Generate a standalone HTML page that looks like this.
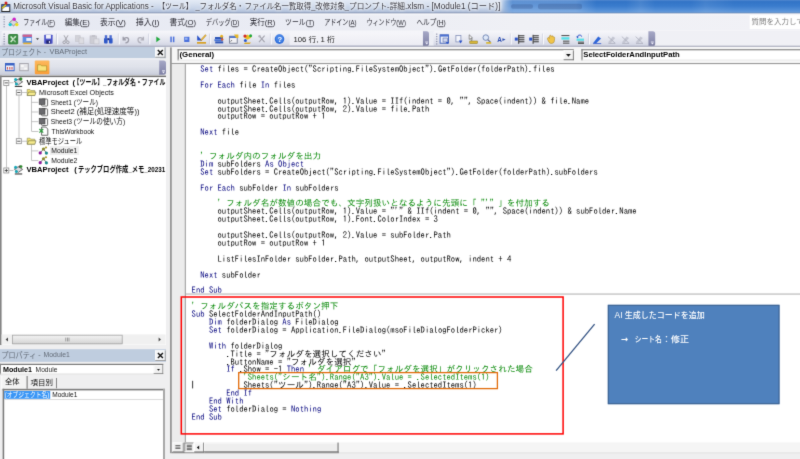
<!DOCTYPE html>
<html lang="ja"><head><meta charset="utf-8"><title>Microsoft Visual Basic for Applications</title>
<style>
html,body{margin:0;padding:0;background:#fff;}
body{width:800px;height:459px;overflow:hidden;position:relative;font-family:"Liberation Sans","Noto Sans CJK JP",sans-serif;}
#root{position:absolute;left:0;top:0;width:800px;height:459px;overflow:hidden;background:#fff;will-change:transform;filter:url(#soft);}
#root div,#root svg{position:absolute;box-sizing:border-box;}
svg.L{left:0;top:0;}
svg.T text{white-space:pre;font-family:"Liberation Sans","Noto Sans CJK JP",sans-serif;}
.code{position:absolute;white-space:pre;font-family:"IPAGothic","Liberation Mono","Noto Sans CJK JP",monospace;font-size:8.64px;line-height:7.9px;letter-spacing:0.008px;color:#000;margin:0;}
.k{color:#00007c}.c{color:#0a8a0a}
u{text-decoration:underline;text-underline-offset:0.5px;text-decoration-thickness:0.6px}
</style></head><body>
<svg width="0" height="0" style="position:absolute"><defs><filter id="soft" x="0" y="0" width="100%" height="100%" color-interpolation-filters="sRGB"><feConvolveMatrix order="3" kernelMatrix="0.0113 0.0838 0.0113 0.0838 0.6193 0.0838 0.0113 0.0838 0.0113" edgeMode="duplicate" preserveAlpha="true"/></filter></defs></svg>
<div id="root">
<svg class="L" width="800" height="459" viewBox="0 0 800 459"><defs><linearGradient id="tl" x1="0" y1="0" x2="0" y2="1"><stop offset="0" stop-color="#e4ebf5"/><stop offset="0.25" stop-color="#d9e2f0"/><stop offset="0.6" stop-color="#c8d4e8"/><stop offset="0.85" stop-color="#b3c2db"/><stop offset="1" stop-color="#a0afca"/></linearGradient><linearGradient id="tr" x1="0" y1="0" x2="0" y2="1"><stop offset="0" stop-color="#5288d0"/><stop offset="0.12" stop-color="#3274c6"/><stop offset="0.45" stop-color="#3a7ccd"/><stop offset="0.8" stop-color="#5892d8"/><stop offset="0.92" stop-color="#6a9edb"/><stop offset="1" stop-color="#7a9cc8"/></linearGradient><linearGradient id="tm" x1="0" y1="0" x2="1" y2="0"><stop offset="0" stop-color="#000"/><stop offset="1" stop-color="#fff"/></linearGradient><mask id="tmask" maskUnits="userSpaceOnUse" x="0" y="0" width="800" height="14"><rect x="500" y="0" width="13" height="14" fill="url(#tm)"/><rect x="513" y="0" width="287" height="14" fill="#fff"/></mask><linearGradient id="g4" x1="0" y1="0" x2="1" y2="0"><stop offset="0" stop-color="rgb(235,240,250)" stop-opacity="0"/><stop offset="0.03" stop-color="rgb(235,240,250)" stop-opacity=".24"/><stop offset="0.24" stop-color="rgb(235,240,250)" stop-opacity=".22"/><stop offset="0.31" stop-color="rgb(235,240,250)" stop-opacity="0"/><stop offset="0.41" stop-color="rgb(255,255,255)" stop-opacity="0"/><stop offset="0.46" stop-color="rgb(255,255,255)" stop-opacity=".10"/><stop offset="0.51" stop-color="rgb(255,255,255)" stop-opacity="0"/><stop offset="0.63" stop-color="rgb(255,255,255)" stop-opacity="0"/><stop offset="0.68" stop-color="rgb(255,255,255)" stop-opacity=".08"/><stop offset="0.78" stop-color="rgb(255,255,255)" stop-opacity="0"/><stop offset="1" stop-color="rgb(255,255,255)" stop-opacity="0"/></linearGradient><linearGradient id="g5" x1="0" y1="0" x2="1" y2="0"><stop offset="0" stop-color="#e6e9f2"/><stop offset="0.38" stop-color="#eaecf4"/><stop offset="0.65" stop-color="#eff0f5"/><stop offset="1" stop-color="#f1f1f6"/></linearGradient><linearGradient id="g6" x1="0" y1="0" x2="0" y2="1"><stop offset="0" stop-color="rgb(255,255,255)" stop-opacity=".7"/><stop offset="1" stop-color="rgb(255,255,255)" stop-opacity="0"/></linearGradient><linearGradient id="g7" x1="0" y1="0" x2="1" y2="0"><stop offset="0" stop-color="#e6e9f2"/><stop offset="0.38" stop-color="#eaecf4"/><stop offset="0.65" stop-color="#eff0f5"/><stop offset="1" stop-color="#f0f0f5"/></linearGradient><linearGradient id="g8" x1="0" y1="0" x2="0" y2="1"><stop offset="0" stop-color="#f6f6fa"/><stop offset="0.35" stop-color="#ecedf4"/><stop offset="0.7" stop-color="#dfe1ec"/><stop offset="1" stop-color="#d0d3e2"/></linearGradient><linearGradient id="g9" x1="0" y1="0" x2="0" y2="1"><stop offset="0" stop-color="#a6a8c6"/><stop offset="0.6" stop-color="#8e90b2"/><stop offset="1" stop-color="#7c7ea2"/></linearGradient><linearGradient id="g10" x1="0" y1="0" x2="0" y2="1"><stop offset="0" stop-color="#f6f6fa"/><stop offset="0.35" stop-color="#ecedf4"/><stop offset="0.7" stop-color="#dfe1ec"/><stop offset="1" stop-color="#d0d3e2"/></linearGradient><linearGradient id="g11" x1="0" y1="0" x2="0" y2="1"><stop offset="0" stop-color="#a6a8c6"/><stop offset="0.6" stop-color="#8e90b2"/><stop offset="1" stop-color="#7c7ea2"/></linearGradient><linearGradient id="g12" x1="0" y1="0" x2="0" y2="1"><stop offset="0" stop-color="#f6f6fa"/><stop offset="1" stop-color="#ececf3"/></linearGradient><linearGradient id="g13" x1="0" y1="0" x2="0" y2="1"><stop offset="0" stop-color="#f2f3f7"/><stop offset="0.12" stop-color="#e6e8ef"/><stop offset="0.5" stop-color="#dfe2ea"/><stop offset="0.88" stop-color="#cfd3df"/><stop offset="1" stop-color="#c2c6d4"/></linearGradient><linearGradient id="g14" x1="0" y1="0" x2="0" y2="1"><stop offset="0" stop-color="#a6a8c6"/><stop offset="0.6" stop-color="#8e90b2"/><stop offset="1" stop-color="#7c7ea2"/></linearGradient><linearGradient id="g15" x1="0" y1="0" x2="0" y2="1"><stop offset="0" stop-color="#fdb85c"/><stop offset="1" stop-color="#f99e38"/></linearGradient><linearGradient id="g16" x1="0" y1="0" x2="0" y2="1"><stop offset="0" stop-color="#f4f4f4"/><stop offset="0.45" stop-color="#e6e6e6"/><stop offset="1" stop-color="#d2d2d2"/></linearGradient></defs>
<rect x="0" y="0" width="800" height="13.6" fill="url(#tl)"/>
<rect x="0" y="0" width="800" height="13.6" fill="url(#tr)" mask="url(#tmask)"/>
<rect x="505" y="0" width="295" height="12.6" fill="url(#g4)"/>
<path d="M513 4.2H531A2 2 0 0 1 533 6.2V6.8A2 2 0 0 1 531 8.8H513A2 2 0 0 1 511 6.8V6.2A2 2 0 0 1 513 4.2Z" fill="rgb(30,50,100)" fill-opacity=".22"/>
<path d="M540 3.8H580A2 2 0 0 1 582 5.8V7.2A2 2 0 0 1 580 9.2H540A2 2 0 0 1 538 7.2V5.8A2 2 0 0 1 540 3.8Z" fill="rgb(30,50,100)" fill-opacity=".22"/>
<rect x="0" y="12.6" width="800" height="1" fill="rgb(95,110,145)" fill-opacity=".6"/>
<g transform="translate(1 1.5)"><rect x="0.8" y="3.2" width="8" height="6.8" fill="#fff" stroke="#222" stroke-width="1"/><rect x="0.8" y="3.2" width="8" height="2" fill="#3a62c8"/><path d="M0.5 6 L4.5 2.5 L5.8 3.8 L1.6 7.2Z" fill="#e8d020" stroke="#333" stroke-width=".4"/><circle cx="5" cy="1.6" r="1.5" fill="#d02020"/></g>
<rect x="0" y="13.6" width="800" height="17" fill="url(#g5)"/>
<rect x="0" y="13.6" width="800" height="2.2" fill="url(#g6)"/>
<rect x="3.6" y="16.4" width="1.1" height="1.1" fill="#7a7f9a"/>
<rect x="3.6" y="18.85" width="1.1" height="1.1" fill="#7a7f9a"/>
<rect x="3.6" y="21.3" width="1.1" height="1.1" fill="#7a7f9a"/>
<rect x="3.6" y="23.75" width="1.1" height="1.1" fill="#7a7f9a"/>
<rect x="3.6" y="26.2" width="1.1" height="1.1" fill="#7a7f9a"/>
<g transform="translate(8 17)"><path d="M1.5 5.5 L5.5 2.2 L9.5 5.5 L5.5 8.8Z" fill="#d8d8dc" stroke="#555" stroke-width=".6"/><circle cx="2.2" cy="7.6" r="1.7" fill="#18c8d8"/><circle cx="8.8" cy="7.6" r="1.7" fill="#e8e018"/><circle cx="6.2" cy="2.2" r="1.7" fill="#d020c8"/></g>
<rect x="749.6" y="15.2" width="51" height="13.8" fill="#fff"/>
<rect x="0" y="30.6" width="800" height="15.8" fill="url(#g7)"/>
<path d="M3 31H423.5V46.2H3A1.5 1.5 0 0 1 1.5 44.7V32.5A1.5 1.5 0 0 1 3 31Z" fill="url(#g8)"/>
<path d="M423 31.3H426.5A2.5 2.5 0 0 1 429 33.8V43.7A2.5 2.5 0 0 1 426.5 46.2H423V31.3Z" fill="url(#g9)"/>
<rect x="425.2" y="41.6" width="3" height="0.9" fill="#f4f4ff"/>
<polygon points="425.6,43 428,43 426.8,44.6" fill="#f4f4ff"/>
<path d="M435 31H648.5V46.2H435A1.5 1.5 0 0 1 433.5 44.7V32.5A1.5 1.5 0 0 1 435 31Z" fill="url(#g10)"/>
<path d="M648.4 31.3H652.7A2.5 2.5 0 0 1 655.2 33.8V43.7A2.5 2.5 0 0 1 652.7 46.2H648.4V31.3Z" fill="url(#g11)"/>
<rect x="650.8" y="41.6" width="3" height="0.9" fill="#f4f4ff"/>
<polygon points="651.2,43 653.6,43 652.4,44.6" fill="#f4f4ff"/>
<rect x="3.6" y="33.6" width="1.1" height="1.1" fill="#7a7f9a"/>
<rect x="3.6" y="36.05" width="1.1" height="1.1" fill="#7a7f9a"/>
<rect x="3.6" y="38.5" width="1.1" height="1.1" fill="#7a7f9a"/>
<rect x="3.6" y="40.95" width="1.1" height="1.1" fill="#7a7f9a"/>
<rect x="3.6" y="43.4" width="1.1" height="1.1" fill="#7a7f9a"/>
<rect x="436.2" y="33.6" width="1.1" height="1.1" fill="#7a7f9a"/>
<rect x="436.2" y="36.05" width="1.1" height="1.1" fill="#7a7f9a"/>
<rect x="436.2" y="38.5" width="1.1" height="1.1" fill="#7a7f9a"/>
<rect x="436.2" y="40.95" width="1.1" height="1.1" fill="#7a7f9a"/>
<rect x="436.2" y="43.4" width="1.1" height="1.1" fill="#7a7f9a"/>
<rect x="56.2" y="33.6" width="0.8" height="10.4" fill="#c9ccdb"/>
<rect x="57" y="33.8" width="1.1" height="10.6" fill="#fbfbfe"/>
<rect x="117.9" y="33.6" width="0.8" height="10.4" fill="#c9ccdb"/>
<rect x="118.7" y="33.8" width="1.1" height="10.6" fill="#fbfbfe"/>
<rect x="148.4" y="33.6" width="0.8" height="10.4" fill="#c9ccdb"/>
<rect x="149.2" y="33.8" width="1.1" height="10.6" fill="#fbfbfe"/>
<rect x="209.3" y="33.6" width="0.8" height="10.4" fill="#c9ccdb"/>
<rect x="210.1" y="33.8" width="1.1" height="10.6" fill="#fbfbfe"/>
<rect x="269.9" y="33.6" width="0.8" height="10.4" fill="#c9ccdb"/>
<rect x="270.7" y="33.8" width="1.1" height="10.6" fill="#fbfbfe"/>
<rect x="509.9" y="33.6" width="0.8" height="10.4" fill="#c9ccdb"/>
<rect x="510.7" y="33.8" width="1.1" height="10.6" fill="#fbfbfe"/>
<rect x="542" y="33.6" width="0.8" height="10.4" fill="#c9ccdb"/>
<rect x="542.8" y="33.8" width="1.1" height="10.6" fill="#fbfbfe"/>
<rect x="588.1" y="33.6" width="0.8" height="10.4" fill="#c9ccdb"/>
<rect x="588.9" y="33.8" width="1.1" height="10.6" fill="#fbfbfe"/>
<rect x="289.6" y="32.4" width="133" height="12.8" fill="url(#g12)"/>
<g transform="translate(8.2 34)"><rect x=".5" y=".5" width="9" height="9.4" rx=".6" fill="#3f9148" stroke="#2c7a36" stroke-width=".9"/><path d="M2.4 2.4 L7.4 8 M7.6 2.2 L2.4 8" stroke="#d6ecd4" stroke-width="1.5"/><path d="M5 5.2 L8.6 5.2 M5 7 L8.6 7" stroke="#2c7a36" stroke-width=".6"/></g>
<g transform="translate(22.3 34)"><rect x=".3" y=".6" width="9.4" height="8.6" fill="#5d8fe0"/><rect x=".3" y=".6" width="9.4" height="2.2" fill="#d05d8a"/><rect x="4" y="4" width="5" height="3" fill="#e8eefc"/><rect x="1" y="8.6" width="8" height="1.6" fill="#e6b030"/></g>
<polygon points="36,38.2 39,38.2 37.5,40" fill="#333"/>
<g transform="translate(43.9 34.4)"><rect x=".3" y=".3" width="8.4" height="9" rx=".6" fill="#4a52c8"/><rect x="2" y=".6" width="5" height="3.6" fill="#f2f2fa"/><rect x="2.4" y="6" width="4.2" height="3.3" fill="#20246a"/><rect x="5" y="6.6" width="1.1" height="2.2" fill="#dde"/></g>
<g transform="translate(62 34.5)"><path d="M2 .8 L5.2 6.5 M6 .8 L2.8 6.5" stroke="#9a9aa2" stroke-width=".9" fill="none"/><circle cx="2.2" cy="7.8" r="1.3" fill="none" stroke="#9a9aa2" stroke-width=".9"/><circle cx="5.8" cy="7.8" r="1.3" fill="none" stroke="#9a9aa2" stroke-width=".9"/></g>
<g transform="translate(75 34.5)"><rect x=".6" y="1.2" width="4.6" height="5.6" fill="#d2d2d8" stroke="#c2c2ca" stroke-width=".6"/><rect x="4" y="3.4" width="4.8" height="5.8" fill="#dcdce2" stroke="#c0c0c8" stroke-width=".6"/></g>
<g transform="translate(89.4 34.3)"><rect x=".6" y="1.6" width="6.6" height="7.4" fill="#cdcdd4" stroke="#bdbdc6" stroke-width=".6"/><rect x="2.5" y=".8" width="3.2" height="1.8" fill="#c0c0c8"/><rect x="4.6" y="4.6" width="5" height="5" fill="#e0e0e6" stroke="#c0c0c8" stroke-width=".6"/></g>
<g transform="translate(103.6 34.6)"><rect x=".4" y="3.4" width="3.6" height="5.6" rx="1" fill="#2f58c8"/><rect x="5.4" y="3.4" width="3.6" height="5.6" rx="1" fill="#2f58c8"/><rect x="1.2" y=".6" width="2.4" height="3.4" fill="#4a6ad0"/><rect x="5.8" y=".6" width="2.4" height="3.4" fill="#4a6ad0"/><rect x="3.8" y="3.6" width="1.8" height="2" fill="#1c2c80"/></g>
<g transform="translate(122 34.8)"><path d="M1.2 2 L1.2 5 L4 5 M1.4 4.8 C3 2 6.6 2.4 6.6 5 C6.6 6.8 5 8 3.4 8" fill="none" stroke="#9a9aa6" stroke-width="1.3"/></g>
<g transform="translate(136.2 34.8)"><path d="M7.2 2 L7.2 5 L4.4 5 M7 4.8 C5.4 2 1.8 2.4 1.8 5 C1.8 6.8 3.4 8 5 8" fill="none" stroke="#b0b0ba" stroke-width="1.3"/></g>
<g transform="translate(156 36.2)"><path d="M.3 .2 L4.3 3.1 L.3 6Z" fill="#20a83c"/></g>
<g transform="translate(170.1 36.6)"><rect x=".2" y="0" width="1.5" height="5.6" fill="#4a70dc"/><rect x="2.8" y="0" width="1.5" height="5.6" fill="#4a70dc"/></g>
<g transform="translate(184 36.6)"><rect x=".2" y=".2" width="5.2" height="5.2" fill="#4a70dc"/><rect x="1" y="1" width="2.6" height="2.2" fill="#98b4f4"/></g>
<g transform="translate(196.6 34)"><path d="M.6 1.2 L5.4 6.6 L.6 6.6Z" fill="#2a52c8"/><rect x=".4" y="8" width="9" height="1.7" fill="#d8a020"/><path d="M8.8 .6 L9.6 1.6 L5.2 6.4 L4 6.8 L4.4 5.4Z" fill="#f0c030" stroke="#a06818" stroke-width=".4"/></g>
<g transform="translate(214 34)"><rect x="1" y="3" width="8" height="2" fill="#2e56b8"/><rect x=".4" y="5.2" width="8.4" height="2" fill="#4a76d6"/><rect x="1.2" y="7.4" width="8" height="2" fill="#2e56b8"/><circle cx="7.6" cy="2.2" r="1.5" fill="#e8b020"/><circle cx="8.2" cy="5.4" r="1.2" fill="#e05a28"/></g>
<g transform="translate(229 34)"><rect x=".6" y="2.2" width="7.6" height="7" fill="#f2f2f6" stroke="#6a7088" stroke-width=".8"/><rect x=".6" y="2.2" width="7.6" height="1.8" fill="#5074c8"/><path d="M5 .6 L9.4 .6 L9.4 4 L7.2 4Z" fill="#e8b828"/><path d="M3 6 L1.6 7.6" stroke="#555" stroke-width=".8"/></g>
<g transform="translate(243 34)"><path d="M4.5 .6 L8.4 3.4 L4.5 5.8 L.8 3.2Z" fill="#e8c020"/><circle cx="2" cy="2" r="1.6" fill="#d02828"/><circle cx="7.6" cy="1.8" r="1.5" fill="#20a838"/><circle cx="2.4" cy="6.6" r="1.5" fill="#2858d0"/><path d="M2 8.4 L8 8.4 L6.6 10 L.8 10Z" fill="#d8a828"/></g>
<g transform="translate(258 34.6)"><path d="M1 1 L6.6 7.6 M6.6 1 L1 7.6" stroke="#a2a2ac" stroke-width="1.1"/><circle cx="1.6" cy="1.6" r="1.2" fill="#b4b4bc"/></g>
<g transform="translate(274.4 34)"><circle cx="5.1" cy="5.1" r="4.8" fill="#2f6fdc"/><circle cx="5.1" cy="4.4" r="3.6" fill="#5a95ee" opacity=".55"/></g>
<g transform="translate(439.6 34)"><rect x=".5" y=".8" width="8.4" height="8.4" fill="#f0f4fc" stroke="#3a5cb8" stroke-width=".9"/><rect x=".5" y=".8" width="8.4" height="1.8" fill="#4a70d0"/><rect x="3.4" y="4" width="4.4" height="4" fill="#cfd8f0" stroke="#5a6ca8" stroke-width=".6"/><path d="M6 8 L9.4 8 L7.7 10Z" fill="#2a52c8"/></g>
<g transform="translate(455.4 35)"><rect x=".5" y=".5" width="5" height="6.4" fill="#f4f6fc" stroke="#8490b8" stroke-width=".8"/><path d="M3.4 5.6 L7 5.6 L5.2 8.4Z" fill="#2a52c8"/></g>
<g transform="translate(468.2 34)"><path d="M1 .8 L1 5.4 L2.2 4.4 L3.2 6.6 L4 6.2 L3 4 L4.4 4Z" fill="#fff" stroke="#555" stroke-width=".6"/><rect x="1.6" y="7" width="7.6" height="2.6" fill="#d8b838" stroke="#8a7420" stroke-width=".5"/></g>
<g transform="translate(482.2 34)"><circle cx="3.6" cy="3.6" r="2.8" fill="#dfe8f8" stroke="#6a80b0" stroke-width=".9"/><path d="M5.6 5.6 L8.4 8.4" stroke="#6a7088" stroke-width="1.2"/><rect x="4" y="8" width="5" height="1.8" fill="#d8b838"/></g>
<polygon points="502.4,38.2 505.6,39.6 502.4,41" fill="#2a4cb0"/>
<g transform="translate(514.8 34.6)"><rect x="0" y="3" width="3" height="3" fill="#2a52c8"/><rect x="4" y=".6" width="5.6" height="1.1" fill="#444"/><rect x="4" y="2.6" width="5.6" height="1.1" fill="#444"/><rect x="4" y="4.6" width="5.6" height="1.1" fill="#444"/><rect x="4" y="6.6" width="5.6" height="1.1" fill="#444"/><rect x="3.4" y=".2" width="1" height="9" fill="#333"/></g>
<g transform="translate(529.2 34.6)"><rect x="0" y="3" width="3" height="3" fill="#2a52c8"/><rect x="4" y=".6" width="5.6" height="1.1" fill="#444"/><rect x="4" y="2.6" width="5.6" height="1.1" fill="#444"/><rect x="4" y="4.6" width="5.6" height="1.1" fill="#444"/><rect x="4" y="6.6" width="5.6" height="1.1" fill="#444"/><rect x="3.4" y=".2" width="1" height="9" fill="#333"/></g>
<g transform="translate(546.6 34.4)"><path d="M1 5 C.4 3 2 2.4 2.8 4 L2.8 1.6 C3.4 .4 4.6 .8 4.6 2 C5.4 1 6.6 1.4 6.4 2.6 C7.6 2 8.4 3 8 4.4 L7.6 7.4 C7 9.4 3.4 9.6 2.4 7.8Z" fill="#f0c44a" stroke="#a07a20" stroke-width=".5"/></g>
<g transform="translate(561 34.6)"><rect x=".4" y=".4" width="8" height="1.1" fill="#555"/><rect x=".4" y="2.6" width="8" height="2.4" fill="#58e0e8"/><rect x="2" y="6" width="6.4" height="1.1" fill="#555"/><rect x="2" y="8" width="6.4" height="1.1" fill="#555"/></g>
<g transform="translate(576 34)"><path d="M1.4 3 C1.4 .6 5.6 .4 5.6 2.6" fill="none" stroke="#2a52c8" stroke-width="1"/><path d="M.2 2.4 L2.8 2.4 L1.5 4.4Z" fill="#2a52c8"/><rect x=".6" y="4.6" width="7.4" height="2.2" fill="#58e0e8"/><rect x="2" y="7.6" width="6" height="1.1" fill="#555"/><rect x="2" y="9" width="6" height="1" fill="#555"/></g>
<g transform="translate(592.6 35)"><path d="M.6 8 L5.6 1.4 L8.4 3.4 L3.4 8.4Z" fill="#2f66d8"/><path d="M.4 8.6 L8.6 8.6" stroke="#2a52c8" stroke-width=".8"/></g>
<g transform="translate(607.4 35)"><path d="M.6 7.6 L5.4 1.4 L7.8 3 L3.4 8Z" fill="#c4c6d2"/><path d="M.6 1.6 L7.6 8 M1 8.4 L8 8.4" stroke="#a4a6b4" stroke-width=".7"/></g>
<g transform="translate(621.2 35)"><path d="M.6 7.6 L5.4 1.4 L7.8 3 L3.4 8Z" fill="#c4c6d2"/><path d="M.6 1.6 L7.6 8 M1 8.4 L8 8.4" stroke="#a4a6b4" stroke-width=".7"/></g>
<g transform="translate(635 35)"><path d="M.6 7.6 L5.4 1.4 L7.8 3 L3.4 8Z" fill="#c4c6d2"/><path d="M.6 1.6 L7.6 8 M1 8.4 L8 8.4" stroke="#a4a6b4" stroke-width=".7"/></g>
<rect x="0" y="46.4" width="800" height="413" fill="#efeff0"/>
<rect x="0" y="46.4" width="166" height="11.9" fill="#bfcddf"/>
<rect x="0" y="45.7" width="800" height="1.1" fill="#a6a9bb"/>
<rect x="155.2" y="47.4" width="10.2" height="10.2" fill="#f4f5f7"/><rect x="155.2" y="47.4" width="10.2" height="0.8" fill="#fff"/><rect x="155.2" y="47.4" width="0.8" height="10.2" fill="#fff"/><rect x="155.2" y="56.8" width="10.2" height="0.8" fill="#8a8a8a"/><rect x="164.6" y="47.4" width="0.8" height="10.2" fill="#8a8a8a"/>
<g transform="translate(157.3 49.4)"><path d="M.5 .5 L5.5 5.5 M5.5 .5 L.5 5.5" stroke="#111" stroke-width="1.35"/></g>
<rect x="0" y="58.3" width="160" height="16.9" fill="url(#g13)"/>
<path d="M159.2 60.4H163.5A2.5 2.5 0 0 1 166 62.9V72.3A2.5 2.5 0 0 1 163.5 74.8H159.2V60.4Z" fill="url(#g14)"/>
<rect x="162" y="70.4" width="3" height="0.9" fill="#f4f4ff"/>
<polygon points="162.3,71.8 164.7,71.8 163.5,73.4" fill="#f4f4ff"/>
<g transform="translate(5 63)"><rect x=".5" y=".5" width="8.6" height="7.2" fill="#f4f6fc" stroke="#3a62c4" stroke-width="1"/><rect x=".5" y=".5" width="8.6" height="2" fill="#3a62c4"/><path d="M2.4 4 L2.4 6.6 M4.8 4 L4.8 6.6 M7 4 L7 6.6" stroke="#c03030" stroke-width=".9"/></g>
<g transform="translate(19.2 63)"><rect x=".5" y=".5" width="8.6" height="7.2" fill="#e4e4e8" stroke="#a8a8b0" stroke-width="1"/><rect x="1.6" y="2" width="3" height="2" fill="#f8f8f8"/><rect x="5" y="4.6" width="3" height="2" fill="#f8f8f8"/></g>
<path d="M35.8 60.6H48.4A1 1 0 0 1 49.4 61.6V73.2A1 1 0 0 1 48.4 74.2H35.8A1 1 0 0 1 34.8 73.2V61.6A1 1 0 0 1 35.8 60.6Z" fill="url(#g15)"/>
<g transform="translate(37.2 63.4)"><path d="M.4 1.4 L3.6 1.4 L4.4 2.4 L9.4 2.4 L9.4 7.6 L.4 7.6Z" fill="#f8e27a" stroke="#b0902a" stroke-width=".7"/></g>
<rect x="0" y="75.6" width="166" height="269.4" fill="#fff"/><rect x="0" y="75.6" width="166" height="1.5" fill="#707070"/><rect x="0" y="75.6" width="1.6" height="269.4" fill="#858585"/>
<rect x="6" y="82.4" width="0.8" height="87.57" fill="#b6b6b6"/>
<rect x="18.6" y="92.13" width="0.8" height="48.65" fill="#b6b6b6"/>
<rect x="31" y="96.13" width="0.8" height="34.92" fill="#b6b6b6"/>
<rect x="31" y="144.78" width="0.8" height="15.46" fill="#b6b6b6"/>
<rect x="9" y="82.4" width="4.5" height="0.8" fill="#b6b6b6"/>
<rect x="9" y="169.97" width="4.5" height="0.8" fill="#b6b6b6"/>
<rect x="21.5" y="92.13" width="5.5" height="0.8" fill="#b6b6b6"/>
<rect x="21.5" y="140.78" width="5.5" height="0.8" fill="#b6b6b6"/>
<rect x="31.4" y="101.86" width="7" height="0.8" fill="#b6b6b6"/>
<rect x="31.4" y="111.59" width="7" height="0.8" fill="#b6b6b6"/>
<rect x="31.4" y="121.32" width="7" height="0.8" fill="#b6b6b6"/>
<rect x="31.4" y="131.05" width="7" height="0.8" fill="#b6b6b6"/>
<rect x="31.4" y="150.51" width="7" height="0.8" fill="#b6b6b6"/>
<rect x="31.4" y="160.24" width="7" height="0.8" fill="#b6b6b6"/>
<rect x="3.4" y="80" width="5.8" height="5.8" fill="#fff"/><rect x="3.8" y="80.4" width="5" height="5" fill="none" stroke="#8c8c8c" stroke-width="0.8"/>
<rect x="4.7" y="82.5" width="3.2" height="0.8" fill="#333"/>
<rect x="15.9" y="89.63" width="5.8" height="5.8" fill="#fff"/><rect x="16.3" y="90.03" width="5" height="5" fill="none" stroke="#8c8c8c" stroke-width="0.8"/>
<rect x="17.2" y="92.13" width="3.2" height="0.8" fill="#333"/>
<rect x="15.9" y="138.28" width="5.8" height="5.8" fill="#fff"/><rect x="16.3" y="138.68" width="5" height="5" fill="none" stroke="#8c8c8c" stroke-width="0.8"/>
<rect x="17.2" y="140.78" width="3.2" height="0.8" fill="#333"/>
<rect x="3.4" y="167.57" width="5.8" height="5.8" fill="#fff"/><rect x="3.8" y="167.97" width="5" height="5" fill="none" stroke="#8c8c8c" stroke-width="0.8"/>
<rect x="4.7" y="170.07" width="3.2" height="0.8" fill="#333"/>
<rect x="5.9" y="168.87" width="0.8" height="3.2" fill="#333"/>
<g transform="translate(13.4 77.2)"><path d="M1 4.4 L5 1.8 L9.2 4.6 L5 7.6Z" fill="#dcdce0" stroke="#333" stroke-width=".7"/><circle cx="2.2" cy="2.4" r="1.5" fill="#18a8b8"/><circle cx="7.6" cy="1.8" r="1.4" fill="#2a8a2a"/><circle cx="3" cy="6.8" r="1.5" fill="#18a8b8"/><path d="M1.4 9.2 L8.8 9.2" stroke="#222" stroke-width="1"/><path d="M6.6 .4 L5.6 3" stroke="#222" stroke-width=".7"/></g>
<g transform="translate(26.8 88.33)"><path d="M.4 1.2 L3.2 1.2 L4 2.2 L8 2.2 L8 7.2 L.4 7.2Z" fill="#f4e268" stroke="#8a8a5a" stroke-width=".6"/><path d="M1.8 3.8 L9.2 3.8 L8 7.2 L.4 7.2Z" fill="#f7ec8c" stroke="#6a6a4a" stroke-width=".6"/></g>
<g transform="translate(38.6 97.66)"><rect x="3" y="1.4" width="6" height="7" rx=".8" fill="#fff" stroke="#4a4a4a" stroke-width=".8"/><rect x=".6" y="1.2" width="5.8" height="5.6" fill="#6a6a6e" stroke="#3c3c3c" stroke-width=".6"/></g>
<g transform="translate(38.6 107.39)"><rect x="3" y="1.4" width="6" height="7" rx=".8" fill="#fff" stroke="#4a4a4a" stroke-width=".8"/><rect x=".6" y="1.2" width="5.8" height="5.6" fill="#6a6a6e" stroke="#3c3c3c" stroke-width=".6"/></g>
<g transform="translate(38.6 117.12)"><rect x="3" y="1.4" width="6" height="7" rx=".8" fill="#fff" stroke="#4a4a4a" stroke-width=".8"/><rect x=".6" y="1.2" width="5.8" height="5.6" fill="#6a6a6e" stroke="#3c3c3c" stroke-width=".6"/></g>
<g transform="translate(38.6 126.45)"><path d="M3 .6 L7.2 .6 L9.2 2.6 L9.2 8.8 L3 8.8Z" fill="#fff" stroke="#444" stroke-width=".8"/><path d="M.8 2.6 L4.6 6.2 M4.6 2.6 L.8 6.2" stroke="#2a9a3a" stroke-width="1.3"/></g>
<g transform="translate(26.8 136.98)"><path d="M.4 1.2 L3.2 1.2 L4 2.2 L8 2.2 L8 7.2 L.4 7.2Z" fill="#f4e268" stroke="#8a8a5a" stroke-width=".6"/><path d="M1.8 3.8 L9.2 3.8 L8 7.2 L.4 7.2Z" fill="#f7ec8c" stroke="#6a6a4a" stroke-width=".6"/></g>
<g transform="translate(38.4 146.11)"><path d="M2 6.6 L5 3 L8 6.6 M5 3 L7.4 1.4" stroke="#555" stroke-width=".8" fill="none"/><circle cx="1.8" cy="6.8" r="1.6" fill="#8a1a9a"/><circle cx="8" cy="7" r="1.6" fill="#1a8a8a"/><circle cx="5" cy="2.8" r="1.5" fill="#8a8a2a"/><circle cx="7.6" cy="1.4" r="1.1" fill="#b0a030"/></g>
<rect x="50" y="146.11" width="29" height="9" fill="#efefef"/>
<g transform="translate(38.4 155.84)"><path d="M2 6.6 L5 3 L8 6.6 M5 3 L7.4 1.4" stroke="#555" stroke-width=".8" fill="none"/><circle cx="1.8" cy="6.8" r="1.6" fill="#8a1a9a"/><circle cx="8" cy="7" r="1.6" fill="#1a8a8a"/><circle cx="5" cy="2.8" r="1.5" fill="#8a8a2a"/><circle cx="7.6" cy="1.4" r="1.1" fill="#b0a030"/></g>
<g transform="translate(13.4 164.77)"><path d="M1 4.4 L5 1.8 L9.2 4.6 L5 7.6Z" fill="#dcdce0" stroke="#333" stroke-width=".7"/><circle cx="2.2" cy="2.4" r="1.5" fill="#18a8b8"/><circle cx="7.6" cy="1.8" r="1.4" fill="#2a8a2a"/><circle cx="3" cy="6.8" r="1.5" fill="#18a8b8"/><path d="M1.4 9.2 L8.8 9.2" stroke="#222" stroke-width="1"/><path d="M6.6 .4 L5.6 3" stroke="#222" stroke-width=".7"/></g>
<rect x="1.6" y="334.4" width="164" height="10.2" fill="#f0f0f0"/>
<path d="M13.5 334.8H121.1A1.5 1.5 0 0 1 122.6 336.3V342.7A1.5 1.5 0 0 1 121.1 344.2H13.5A1.5 1.5 0 0 1 12 342.7V336.3A1.5 1.5 0 0 1 13.5 334.8Z" fill="url(#g16)"/><rect x="12.4" y="335.2" width="109.8" height="8.6" fill="none" stroke="#a6a6a6" stroke-width="0.8"/>
<rect x="65.4" y="337.6" width="0.8" height="3.8" fill="#8c8c8c"/>
<rect x="67" y="337.6" width="0.8" height="3.8" fill="#8c8c8c"/>
<rect x="68.6" y="337.6" width="0.8" height="3.8" fill="#8c8c8c"/>
<polygon points="8,337.6 8,341.4 5.6,339.5" fill="#444"/>
<polygon points="158.6,337.6 161,339.5 158.6,341.4" fill="#444"/>
<rect x="0" y="349.2" width="166" height="12.6" fill="#bfcddf"/>
<rect x="155.2" y="350.4" width="10.4" height="10.4" fill="#f4f5f7"/><rect x="155.2" y="350.4" width="10.4" height="0.8" fill="#fff"/><rect x="155.2" y="350.4" width="0.8" height="10.4" fill="#fff"/><rect x="155.2" y="360" width="10.4" height="0.8" fill="#8a8a8a"/><rect x="164.8" y="350.4" width="0.8" height="10.4" fill="#8a8a8a"/>
<g transform="translate(157.4 352.5)"><path d="M.5 .5 L5.5 5.5 M5.5 .5 L.5 5.5" stroke="#111" stroke-width="1.35"/></g>
<rect x="0" y="363.8" width="163.4" height="10.6" fill="#fff"/><rect x="0" y="363.8" width="163.4" height="1.2" fill="#7a7a7a"/><rect x="0" y="363.8" width="1" height="10.6" fill="#8a8a8a"/><rect x="0" y="373.6" width="163.4" height="0.8" fill="#d8d8d8"/>
<rect x="153.6" y="365" width="9.6" height="9" fill="#f0f0f0"/><rect x="153.6" y="365" width="9.6" height="0.8" fill="#fff"/><rect x="153.6" y="365" width="0.8" height="9" fill="#fff"/><rect x="153.6" y="373.2" width="9.6" height="0.8" fill="#808080"/><rect x="162.4" y="365" width="0.8" height="9" fill="#808080"/>
<polygon points="157,369 160,369 158.5,370.8" fill="#111"/>
<rect x="1.4" y="376" width="26.2" height="13" fill="#f3f3f3"/><rect x="1.4" y="376" width="0.8" height="13" fill="#fff"/><rect x="26.6" y="376" width="1" height="13" fill="#6a6a6a"/>
<rect x="56" y="378" width="0.9" height="10.4" fill="#7a7a7a"/>
<rect x="2.6" y="388.8" width="162.4" height="72" fill="#fff"/><rect x="2.6" y="388.8" width="162.4" height="1.6" fill="#7a7a7a"/><rect x="2.6" y="388.8" width="1.6" height="72" fill="#7a7a7a"/><rect x="163" y="388.8" width="2" height="72" fill="#a8a8a8"/>
<rect x="4.2" y="391" width="46" height="7.8" fill="#3a96f6"/>
<rect x="4.2" y="399.2" width="158.8" height="0.8" fill="#d4d4d4"/>
<rect x="170.4" y="47.4" width="630" height="405.4" fill="#fff"/>
<rect x="170.2" y="47.4" width="1.6" height="405.8" fill="#7e7e7e"/>
<rect x="171.8" y="47.4" width="628.2" height="15.6" fill="#f6f6f6"/>
<rect x="171.8" y="63" width="628.2" height="1.1" fill="#9a9a9a"/>
<rect x="177.6" y="49.2" width="396.2" height="11.2" fill="#fff"/><rect x="177.6" y="49.2" width="396.2" height="1.1" fill="#7a7a7a"/><rect x="177.6" y="49.2" width="1.2" height="11.2" fill="#7a7a7a"/><rect x="177.6" y="59.6" width="396.2" height="0.8" fill="#e4e4e4"/>
<rect x="563.6" y="50.4" width="10.2" height="9.8" fill="#f2f2f2"/><rect x="563.6" y="50.4" width="10.2" height="0.9" fill="#fff"/><rect x="563.6" y="50.4" width="0.9" height="9.8" fill="#fff"/><rect x="563.6" y="59.3" width="10.2" height="0.9" fill="#707070"/><rect x="572.9" y="50.4" width="0.9" height="9.8" fill="#707070"/>
<polygon points="566,54 570.8,54 568.4,56.7" fill="#111"/>
<rect x="581.4" y="49.2" width="220" height="11.2" fill="#fff"/><rect x="581.4" y="49.2" width="220" height="1.1" fill="#7a7a7a"/><rect x="581.4" y="49.2" width="1.2" height="11.2" fill="#7a7a7a"/><rect x="581.4" y="59.6" width="220" height="0.8" fill="#e4e4e4"/>
<rect x="171.8" y="64.1" width="13.2" height="378.4" fill="#ececec"/>
<rect x="184.8" y="64.1" width="1.1" height="378.4" fill="#a0a0a0"/>
<rect x="186" y="293.6" width="614" height="0.9" fill="#a4a4a4"/>
<rect x="171.8" y="442.4" width="628.2" height="10.2" fill="#f5f5f5"/>
<rect x="171.8" y="452.4" width="628.2" height="0.9" fill="#dedede"/>
<rect x="171.8" y="452" width="167" height="1.2" fill="#7c7c7c"/>
<rect x="172.6" y="442.6" width="11" height="9.6" fill="#f0f0f0"/><rect x="172.6" y="442.6" width="11" height="0.8" fill="#fff"/><rect x="172.6" y="442.6" width="0.8" height="9.6" fill="#fff"/><rect x="172.6" y="451.4" width="11" height="0.8" fill="#7a7a7a"/><rect x="182.8" y="442.6" width="0.8" height="9.6" fill="#7a7a7a"/>
<rect x="175.4" y="445.2" width="5" height="0.8" fill="#555"/>
<rect x="175.4" y="446.7" width="5" height="0.8" fill="#555"/>
<rect x="175.4" y="448.2" width="5" height="0.8" fill="#555"/>
<rect x="184.4" y="442.6" width="9.4" height="9.6" fill="#e9e9e9"/><rect x="184.4" y="442.6" width="9.4" height="0.8" fill="#7a7a7a"/><rect x="184.4" y="442.6" width="0.8" height="9.6" fill="#7a7a7a"/><rect x="184.4" y="451.4" width="9.4" height="0.8" fill="#fff"/><rect x="193" y="442.6" width="0.8" height="9.6" fill="#fff"/>
<rect x="186.8" y="444.8" width="5" height="0.8" fill="#444"/>
<rect x="186.8" y="446.3" width="5" height="0.8" fill="#444"/>
<rect x="186.8" y="447.8" width="5" height="0.8" fill="#444"/>
<rect x="186.8" y="449.3" width="5" height="0.8" fill="#444"/>
<rect x="194.2" y="442.6" width="9.6" height="9.6" fill="#f2f2f2"/><rect x="194.2" y="442.6" width="9.6" height="0.8" fill="#fff"/><rect x="194.2" y="442.6" width="0.8" height="9.6" fill="#fff"/><rect x="194.2" y="451.4" width="9.6" height="0.8" fill="#7a7a7a"/><rect x="203" y="442.6" width="0.8" height="9.6" fill="#7a7a7a"/>
<polygon points="199.2,445.6 199.2,449.4 196.8,447.5" fill="#111"/>
<rect x="204" y="442.6" width="134.6" height="9.8" fill="#eeeeee"/><rect x="204" y="442.6" width="134.6" height="0.8" fill="#fdfdfd"/><rect x="204" y="442.6" width="0.8" height="9.8" fill="#fdfdfd"/><rect x="204" y="451.3" width="134.6" height="1.1" fill="#777"/><rect x="337.5" y="442.6" width="1.1" height="9.8" fill="#777"/>
<rect x="192.2" y="380.8" width="0.9" height="7.6" fill="#222"/>
<rect x="607.8" y="304.8" width="171.7" height="99.4" fill="#4f81bd"/><rect x="608.3" y="305.3" width="170.7" height="98.4" fill="none" stroke="#3a5f8f" stroke-width="1"/>
</svg>
<svg class="L T" width="800" height="459" viewBox="0 0 800 459">
<text x="13.3" y="9.2" font-size="8.3" fill="#30303a" style="text-shadow:0 0 2px #fff,0 0 3px #fff,0 0 4px rgba(255,255,255,.8);" textLength="140.5" lengthAdjust="spacingAndGlyphs">Microsoft Visual Basic for Applications -</text>
<text x="158.2" y="9.2" font-size="8" fill="#30303a" style="text-shadow:0 0 2px #fff,0 0 3px #fff,0 0 4px rgba(255,255,255,.8);" textLength="34.5" lengthAdjust="spacingAndGlyphs">【ツール】</text>
<text x="195.4" y="9.2" font-size="8" fill="#30303a" style="text-shadow:0 0 2px #fff,0 0 3px #fff,0 0 4px rgba(255,255,255,.8);" textLength="48.6" lengthAdjust="spacingAndGlyphs">_フォルダ名・</text>
<text x="244.5" y="9.2" font-size="8" fill="#30303a" style="text-shadow:0 0 2px #fff,0 0 3px #fff,0 0 4px rgba(255,255,255,.8);" textLength="104.5" lengthAdjust="spacingAndGlyphs">ファイル名一覧取得_改修対象_</text>
<text x="349" y="9.2" font-size="8" fill="#30303a" style="text-shadow:0 0 2px #fff,0 0 3px #fff,0 0 4px rgba(255,255,255,.8);" textLength="56" lengthAdjust="spacingAndGlyphs">プロンプト-詳細</text>
<text x="405" y="9.2" font-size="8.3" fill="#30303a" style="text-shadow:0 0 2px #fff,0 0 3px #fff,0 0 4px rgba(255,255,255,.8);" textLength="95.3" lengthAdjust="spacingAndGlyphs">.xlsm - [Module1 (コード)]</text>
<text x="23.3" y="25.4" font-size="7.9" fill="#2a2a33" textLength="31.6" lengthAdjust="spacingAndGlyphs">ファイル(<tspan text-decoration="underline">F</tspan>)</text>
<text x="64.7" y="25.4" font-size="7.9" fill="#2a2a33" textLength="25.2" lengthAdjust="spacingAndGlyphs">編集(<tspan text-decoration="underline">E</tspan>)</text>
<text x="100" y="25.4" font-size="7.9" fill="#2a2a33" textLength="25.8" lengthAdjust="spacingAndGlyphs">表示(<tspan text-decoration="underline">V</tspan>)</text>
<text x="135.8" y="25.4" font-size="7.9" fill="#2a2a33" textLength="23.6" lengthAdjust="spacingAndGlyphs">挿入(<tspan text-decoration="underline">I</tspan>)</text>
<text x="169.6" y="25.4" font-size="7.9" fill="#2a2a33" textLength="26.4" lengthAdjust="spacingAndGlyphs">書式(<tspan text-decoration="underline">O</tspan>)</text>
<text x="205.7" y="25.4" font-size="7.9" fill="#2a2a33" textLength="33.7" lengthAdjust="spacingAndGlyphs">デバッグ(<tspan text-decoration="underline">D</tspan>)</text>
<text x="249.8" y="25.4" font-size="7.9" fill="#2a2a33" textLength="25.5" lengthAdjust="spacingAndGlyphs">実行(<tspan text-decoration="underline">R</tspan>)</text>
<text x="285.1" y="25.4" font-size="7.9" fill="#2a2a33" textLength="29.3" lengthAdjust="spacingAndGlyphs">ツール(<tspan text-decoration="underline">T</tspan>)</text>
<text x="324.2" y="25.4" font-size="7.9" fill="#2a2a33" textLength="32.3" lengthAdjust="spacingAndGlyphs">アドイン(<tspan text-decoration="underline">A</tspan>)</text>
<text x="366.8" y="25.4" font-size="7.9" fill="#2a2a33" textLength="39.1" lengthAdjust="spacingAndGlyphs">ウィンドウ(<tspan text-decoration="underline">W</tspan>)</text>
<text x="416.4" y="25.4" font-size="7.9" fill="#2a2a33" textLength="29.3" lengthAdjust="spacingAndGlyphs">ヘルプ(<tspan text-decoration="underline">H</tspan>)</text>
<text x="751.6" y="24.06" font-size="7.4" fill="#7d7d7d" textLength="52" lengthAdjust="spacingAndGlyphs">質問を入力して</text>
<text x="293.4" y="41.63" font-size="7.3" fill="#1a1a1a" textLength="41.3" lengthAdjust="spacingAndGlyphs">106 行, 1 桁</text>
<text x="277.6" y="41.94" font-size="7.6" fill="#fff" font-weight="bold">?</text>
<text x="497.2" y="41.9" font-size="6.4" fill="#2a4cb0" font-weight="bold">A</text>
<text x="1.6" y="54.6" font-size="7.9" fill="#626a76" textLength="44.4" lengthAdjust="spacingAndGlyphs">プロジェクト <tspan dy="-0.9">-</tspan></text>
<text x="49.5" y="54.4" font-size="7.6" fill="#626a76" textLength="37.6" lengthAdjust="spacingAndGlyphs">VBAProject</text>
<text x="26.4" y="85.17" font-size="7.7" fill="#000" font-weight="bold" textLength="42.2" lengthAdjust="spacingAndGlyphs">VBAProject</text>
<text x="72.4" y="85.17" font-size="7.7" fill="#000" font-weight="bold">(</text>
<text x="73.6" y="85.17" font-size="7.7" fill="#000" font-weight="bold" textLength="91.8" lengthAdjust="spacingAndGlyphs">【ツール】_フォルダ名・ファイル</text>
<text x="39.1" y="94.9" font-size="7.7" fill="#111" textLength="74.8" lengthAdjust="spacingAndGlyphs">Microsoft Excel Objects</text>
<text x="50.8" y="104.63" font-size="7.7" fill="#111" textLength="47.2" lengthAdjust="spacingAndGlyphs">Sheet1 (ツール)</text>
<text x="50.8" y="114.36" font-size="7.7" fill="#111" textLength="88.6" lengthAdjust="spacingAndGlyphs">Sheet2 (補足(処理速度等))</text>
<text x="50.8" y="124.09" font-size="7.7" fill="#111" textLength="74.4" lengthAdjust="spacingAndGlyphs">Sheet3 (ツールの使い方)</text>
<text x="51.6" y="133.82" font-size="7.7" fill="#111" textLength="42.6" lengthAdjust="spacingAndGlyphs">ThisWorkbook</text>
<text x="39.1" y="143.55" font-size="7.7" fill="#111" textLength="43.2" lengthAdjust="spacingAndGlyphs">標準モジュール</text>
<text x="51.2" y="153.28" font-size="7.7" fill="#111" textLength="26.2" lengthAdjust="spacingAndGlyphs">Module1</text>
<text x="51.2" y="163.01" font-size="7.7" fill="#111" textLength="26.2" lengthAdjust="spacingAndGlyphs">Module2</text>
<text x="26.4" y="172.14" font-size="7.7" fill="#000" font-weight="bold" textLength="42.2" lengthAdjust="spacingAndGlyphs">VBAProject</text>
<text x="74.2" y="172.14" font-size="7.7" fill="#000" font-weight="bold">(</text>
<text x="78" y="172.14" font-size="7.7" fill="#000" font-weight="bold" textLength="87.2" lengthAdjust="spacingAndGlyphs">テックブログ作成_メモ_20231</text>
<text x="1.5" y="357.6" font-size="7.9" fill="#626a76" textLength="39.1" lengthAdjust="spacingAndGlyphs">プロパティ <tspan dy="-0.9">-</tspan></text>
<text x="43.6" y="357.4" font-size="7.6" fill="#626a76" textLength="26.3" lengthAdjust="spacingAndGlyphs">Module1</text>
<text x="3" y="371.98" font-size="6.9" fill="#000" font-weight="bold" textLength="29" lengthAdjust="spacingAndGlyphs">Module1</text>
<text x="35.6" y="371.98" font-size="6.9" fill="#222" textLength="21.8" lengthAdjust="spacingAndGlyphs">Module</text>
<text x="5" y="384.43" font-size="7.3" fill="#111" textLength="14.6" lengthAdjust="spacingAndGlyphs">全体</text>
<text x="30.6" y="384.83" font-size="7.3" fill="#111" textLength="22.4" lengthAdjust="spacingAndGlyphs">項目別</text>
<text x="4.8" y="397.38" font-size="6.9" fill="#fff" textLength="44.4" lengthAdjust="spacingAndGlyphs">(オブジェクト名)</text>
<text x="52.2" y="397.38" font-size="6.9" fill="#111" textLength="25.2" lengthAdjust="spacingAndGlyphs">Module1</text>
<text x="179.5" y="57.2" font-size="7" fill="#000" font-weight="bold" textLength="34.6" lengthAdjust="spacingAndGlyphs">(General)</text>
<text x="583.3" y="57.2" font-size="7" fill="#000" font-weight="bold" textLength="96.4" lengthAdjust="spacingAndGlyphs">SelectFolderAndInputPath</text>
<text x="614.6" y="318" font-size="8.4" fill="#fff" textLength="8" lengthAdjust="spacingAndGlyphs">AI</text>
<text x="624.8" y="318" font-size="7.9" fill="#fff" style="font-weight:500" textLength="80" lengthAdjust="spacingAndGlyphs">生成したコードを追加</text>
<text x="620.8" y="342" font-size="8.4" fill="#fff" font-weight="bold" style="font-family:'DejaVu Sans','Liberation Sans',sans-serif" textLength="7.2" lengthAdjust="spacingAndGlyphs">→</text>
<text x="634.7" y="342" font-size="7.9" fill="#fff" style="font-weight:500" textLength="27.2" lengthAdjust="spacingAndGlyphs">シート名</text>
<text x="661.9" y="342" font-size="7.9" fill="#fff" style="font-weight:500" textLength="27" lengthAdjust="spacingAndGlyphs">：修正</text>
</svg>
<pre class="code" style="left:191.6px;top:65.0px">  <span class="k">Set</span> files = CreateObject("Scripting.FileSystemObject").GetFolder(folderPath).files

  <span class="k">For</span> <span class="k">Each</span> file <span class="k">In</span> files

      outputSheet.Cells(outputRow, 1).Value = IIf(indent = 0, "", Space(indent)) &amp; file.Name
      outputSheet.Cells(outputRow, 2).Value = file.Path
      outputRow = outputRow + 1

  <span class="k">Next</span> file


  <span class="c">' フォルダ内のフォルダを出力</span>
  <span class="k">Dim</span> subFolders <span class="k">As</span> <span class="k">Object</span>
  <span class="k">Set</span> subFolders = CreateObject("Scripting.FileSystemObject").GetFolder(folderPath).subFolders

  <span class="k">For</span> <span class="k">Each</span> subFolder <span class="k">In</span> subFolders

      <span class="c">' フォルダ名が数値の場合でも、文字列扱いとなるように先頭に「 "'" 」を付加する</span>
      outputSheet.Cells(outputRow, 1).Value = "'" &amp; IIf(indent = 0, "", Space(indent)) &amp; subFolder.Name
      outputSheet.Cells(outputRow, 1).Font.ColorIndex = 3

      outputSheet.Cells(outputRow, 2).Value = subFolder.Path
      outputRow = outputRow + 1

      ListFilesInFolder subFolder.Path, outputSheet, outputRow, indent + 4

  <span class="k">Next</span> subFolder

<span class="k">End</span> <span class="k">Sub</span>

<span class="c">' フォルダパスを指定するボタン押下</span>
<span class="k">Sub</span> SelectFolderAndInputPath()
    <span class="k">Dim</span> folderDialog <span class="k">As</span> FileDialog
    <span class="k">Set</span> folderDialog = Application.FileDialog(msoFileDialogFolderPicker)

    <span class="k">With</span> folderDialog
        .Title = "フォルダを選択してください"
        .ButtonName = "フォルダを選択"
        <span class="k">If</span> .Show = -1 <span class="k">Then</span> <span class="c">' ダイアログで「フォルダを選択」がクリックされた場合</span>
            <span class="c">'Sheets("シート名").Range("A3").Value = .SelectedItems(1)</span>
            Sheets("ツール").Range("A3").Value = .SelectedItems(1)
        <span class="k">End</span> <span class="k">If</span>
    <span class="k">End</span> <span class="k">With</span>
    <span class="k">Set</span> folderDialog = <span class="k">Nothing</span>
<span class="k">End</span> <span class="k">Sub</span></pre>
<svg class="L" width="800" height="459" viewBox="0 0 800 459">
<rect x="181.3" y="297" width="381.8" height="136.9" fill="none" stroke="#ff0000" stroke-width="1.5"/>
<rect x="238.7" y="372.6" width="258.7" height="16" fill="none" stroke="#e26b0a" stroke-width="1.3"/>
<path d="M594.6 324.1 L556.1 370.6" stroke="#2f4f80" stroke-width="1.25" fill="none"/>
</svg>
</div></body></html>
